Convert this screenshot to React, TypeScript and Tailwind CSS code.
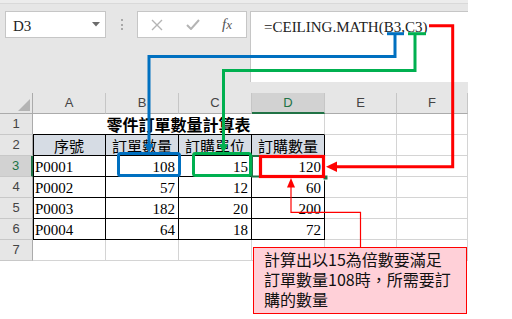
import React from "react";

const serif = { fontFamily: '"Liberation Serif", "Noto Sans CJK TC", serif' };
const cjk = { fontFamily: '"Noto Sans CJK TC", "Noto Sans", sans-serif' };
const sans = { fontFamily: '"Liberation Sans", Arial, sans-serif' };

const COLS = [73, 73, 73, 73, 72, 71];
const LETTERS = ["A", "B", "C", "D", "E", "F"];

function RowHead({ n, selected }: { n: number; selected?: boolean }) {
  return (
    <div
      className={
        "w-[33px] h-[21px] shrink-0 flex items-center justify-center text-[13px] border-b border-[#c8c8c8] " +
        (selected
          ? "bg-[#d2d2d2] border-r-2 border-r-[#217346] text-[#217346]"
          : "bg-[#e6e6e6] border-r border-r-[#ababab] text-[#444]")
      }
      style={sans}
    >
      {n}
    </div>
  );
}

function GrayCell({ w }: { w: number }) {
  return (
    <div
      className="h-[21px] shrink-0 bg-white border-r border-b border-[#d4d4d4]"
      style={{ width: w }}
    />
  );
}

function TCell({
  w,
  children,
  align,
  first,
  head,
}: {
  w: number;
  children?: React.ReactNode;
  align: "left" | "right" | "center";
  first?: boolean;
  head?: boolean;
}) {
  const a =
    align === "left"
      ? "justify-start pl-[2px]"
      : align === "right"
      ? "justify-end pr-[3px]"
      : "justify-center";
  return (
    <div
      className={
        "h-[21px] shrink-0 flex border-r border-b border-black text-black whitespace-nowrap " +
        a +
        (head ? " bg-[#d6dce4] text-[15px] leading-[20px] pt-[1px]" : " bg-white text-[15px] leading-[20px] pt-[1px]") +
        (first ? " shadow-[inset_1px_0_0_#000]" : "")
      }
      style={{ width: w, ...(head ? cjk : serif) }}
    >
      {children}
    </div>
  );
}

const DATA = [
  ["P0001", "108", "15", "120"],
  ["P0002", "57", "12", "60"],
  ["P0003", "182", "20", "200"],
  ["P0004", "64", "18", "72"],
];

export default function App() {
  return (
    <div className="relative w-[512px] h-[319px] bg-white overflow-hidden">
      <div className="w-[468px]">
        {/* formula bar */}
        <div className="h-[93px] bg-[#e6e6e6]">
          <div className="h-[4px] bg-[#ececec] border-b border-[#d9d9d9]" />
          <div className="flex items-start pt-[7px] pl-[5px]">
            <div className="w-[101px] h-[27px] bg-white border border-[#c6c6c6] flex items-center justify-between pl-[7px] pr-[5px]">
              <span className="text-[15px] text-[#222] leading-[20px] pt-[2px]" style={serif}>
                D3
              </span>
              <svg width="8" height="5" viewBox="0 0 8 5">
                <polygon points="0,0 8,0 4,4.5" fill="#6b6b6b" />
              </svg>
            </div>
            <div className="w-[31px] h-[27px] flex flex-col items-center justify-center gap-[2.3px]">
              <div className="w-[2px] h-[2px] bg-[#a8a8a8]" />
              <div className="w-[2px] h-[2px] bg-[#a8a8a8]" />
              <div className="w-[2px] h-[2px] bg-[#a8a8a8]" />
            </div>
            <div className="w-[110px] h-[27px] bg-white border border-[#c6c6c6] flex items-center">
              <div className="w-[37px] flex justify-center">
                <svg width="12" height="12" viewBox="0 0 12 12">
                  <path d="M1 1 L11 11 M11 1 L1 11" stroke="#b4b4b4" strokeWidth="1.4" />
                </svg>
              </div>
              <div className="w-[36px] flex justify-center">
                <svg width="14" height="11" viewBox="0 0 14 11">
                  <path d="M1 6 L5 10 L13 1" stroke="#b4b4b4" strokeWidth="2" fill="none" />
                </svg>
              </div>
              <div className="w-[32px] flex justify-center">
                <span className="text-[15px] italic text-[#555] leading-[20px]" style={serif}>
                  f<span className="text-[13px]">x</span>
                </span>
              </div>
            </div>
            <div className="ml-[3px] w-[218px] h-[71px] bg-white border-l border-t border-[#c6c6c6] pl-[13px] pt-[2px]">
              <span className="text-[15px] text-[#222] leading-[24px] whitespace-nowrap" style={serif}>
                =CEILING.MATH(B3,C3)
              </span>
            </div>
          </div>
        </div>

        {/* column header row */}
        <div className="flex h-[21px]">
          <div className="w-[33px] h-[21px] shrink-0 bg-[#e6e6e6] border-r border-b border-[#ababab] relative">
            <svg className="absolute left-0 top-0" width="33" height="21" viewBox="0 0 33 21">
              <polygon points="30,6 30,18 18,18" fill="#b4b4b4" />
            </svg>
          </div>
          {LETTERS.map((l, i) => (
            <div
              key={l}
              className={
                "h-[21px] shrink-0 flex items-center justify-center text-[13px] border-r border-r-[#c6c6c6] " +
                (l === "D"
                  ? "bg-[#d2d2d2] border-b-2 border-b-[#217346] text-[#217346]"
                  : "bg-[#e6e6e6] border-b border-b-[#ababab] text-[#444]")
              }
              style={{ width: COLS[i], ...sans }}
            >
              {l}
            </div>
          ))}
        </div>

        {/* row 1 */}
        <div className="flex">
          <RowHead n={1} />
          <div
            className="w-[292px] h-[21px] shrink-0 bg-white border-r border-r-[#d4d4d4] border-b border-b-black flex justify-center text-[16px] font-bold leading-[20px] text-black"
            style={cjk}
          >
            零件訂單數量計算表
          </div>
          <GrayCell w={72} />
          <GrayCell w={71} />
        </div>

        {/* row 2 */}
        <div className="flex">
          <RowHead n={2} />
          <TCell w={73} align="center" first head>
            序號
          </TCell>
          <TCell w={73} align="center" head>
            訂單數量
          </TCell>
          <TCell w={73} align="center" head>
            訂購單位
          </TCell>
          <TCell w={73} align="center" head>
            訂購數量
          </TCell>
          <GrayCell w={72} />
          <GrayCell w={71} />
        </div>

        {DATA.map((r, i) => (
          <div className="flex" key={r[0]}>
            <RowHead n={i + 3} selected={i === 0} />
            <TCell w={73} align="left" first>
              {r[0]}
            </TCell>
            <TCell w={73} align="right">
              {r[1]}
            </TCell>
            <TCell w={73} align="right">
              {r[2]}
            </TCell>
            <TCell w={73} align="right">
              {r[3]}
            </TCell>
            <GrayCell w={72} />
            <GrayCell w={71} />
          </div>
        ))}

        {/* row 7 */}
        <div className="flex">
          <RowHead n={7} />
          {COLS.map((w, i) => (
            <GrayCell key={i} w={w} />
          ))}
        </div>
      </div>

      {/* annotation overlay */}
      <svg className="absolute left-0 top-0 pointer-events-none" width="512" height="319" viewBox="0 0 512 319">
        {/* Excel active cell */}
        <rect x="252" y="156" width="72" height="20.5" fill="none" stroke="#217346" strokeWidth="2" />
        <rect x="323" y="175" width="5" height="5" fill="#217346" stroke="#fff" strokeWidth="1" />

        {/* blue */}
        <path d="M387 33.7 H404" stroke="#0070c0" strokeWidth="3" fill="none" />
        <path d="M395 33.7 V56.5 H149 V146" stroke="#0070c0" strokeWidth="3" fill="none" />
        <polygon points="144.5,144 153.5,144 149,153" fill="#0070c0" />
        <rect x="118.5" y="153.5" width="61" height="22" rx="2" fill="none" stroke="#0070c0" strokeWidth="3" />

        {/* green */}
        <path d="M408 33.7 H426" stroke="#00b050" strokeWidth="3" fill="none" />
        <path d="M415 33.7 V70.5 H223.5 V146" stroke="#00b050" strokeWidth="3" fill="none" />
        <polygon points="219,144 228,144 223.5,153" fill="#00b050" />
        <rect x="193.5" y="153.5" width="57" height="22" rx="2" fill="none" stroke="#00b050" strokeWidth="3" />

        {/* red thick */}
        <path d="M429 25.8 H452.7 V166.7 H335" stroke="#ff0000" strokeWidth="3" fill="none" />
        <polygon points="326,166.7 337,161.5 337,172" fill="#ff0000" />
        <rect x="260.5" y="156.5" width="63" height="20" fill="none" stroke="#ff0000" strokeWidth="3.2" />

        {/* red thin pointer */}
        <path d="M360.5 247 V212.3 H291 V185" stroke="#ff0000" strokeWidth="1.2" fill="none" />
        <polygon points="291,178 287,187.5 295,187.5" fill="#ff0000" />
      </svg>

      {/* callout */}
      <div
        className="absolute left-[253px] top-[247px] w-[214px] h-[67px] bg-[#ffd0d8] border border-[#ff0000] pl-[10px] pt-[1px] text-[16px] leading-[20px] text-[#111] whitespace-nowrap"
        style={cjk}
      >
        <div>計算出以15為倍數要滿足</div>
        <div>訂單數量108時，所需要訂</div>
        <div>購的數量</div>
      </div>
    </div>
  );
}
